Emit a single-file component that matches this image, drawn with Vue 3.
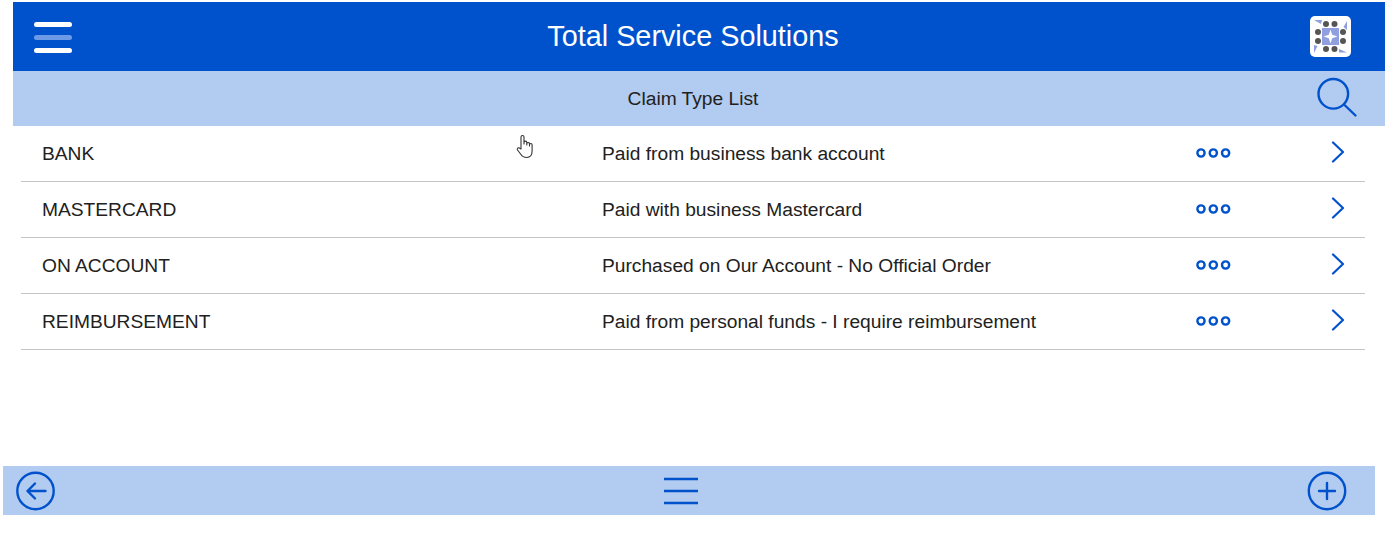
<script setup>
const rows = [
  { name: 'BANK', desc: 'Paid from business bank account' },
  { name: 'MASTERCARD', desc: 'Paid with business Mastercard' },
  { name: 'ON ACCOUNT', desc: 'Purchased on Our Account - No Official Order' },
  { name: 'REIMBURSEMENT', desc: 'Paid from personal funds - I require reimbursement' },
]
</script>

<template>
  <div class="page">
    <div class="main">
      <header class="top">
        <div class="burger">
          <span class="bar"></span>
          <span class="bar dim"></span>
          <span class="bar"></span>
        </div>
        <h1 class="title">Total Service Solutions</h1>
        <div class="logo">
          <svg width="41" height="41" viewBox="0 0 41 41">
            <rect width="41" height="41" rx="5" fill="#fff" />
            <rect x="12" y="12" width="17" height="17" fill="#8f9fdf" />
            <path d="M20.5 13.5 L22.2 18.8 L27.5 20.5 L22.2 22.2 L20.5 27.5 L18.8 22.2 L13.5 20.5 L18.8 18.8 Z" fill="#fff" />
            <g fill="#555">
              <circle cx="16" cy="8" r="3" /><circle cx="24.5" cy="8" r="3" />
              <circle cx="8" cy="16" r="3" /><circle cx="33" cy="16" r="3" />
              <circle cx="8" cy="25" r="3" /><circle cx="33" cy="25" r="3" />
              <circle cx="16" cy="33" r="3" /><circle cx="24.5" cy="33" r="3" />
            </g>
            <g fill="#8f9fdf">
              <path d="M4 4 L12 4 L11 8 Z" />
              <path d="M37 5 L37 14 L33.5 11 Z" />
              <path d="M4 37 L4 29 L7.5 30 Z" />
              <path d="M29 33 L37 36.5 L29 36.5 Z" />
            </g>
          </svg>
        </div>
      </header>
      <div class="sub">
        <span class="sub-title">Claim Type List</span>
        <svg class="search" width="42" height="42" viewBox="0 0 42 42" fill="none" stroke="#0052cc" stroke-width="2.4">
          <circle cx="17.3" cy="16.8" r="14.8" />
          <path d="M28 27.5 L39.5 38.5" stroke-linecap="round" />
        </svg>
      </div>
      <ul class="list">
        <li v-for="r in rows" :key="r.name" class="row">
          <span class="name">{{ r.name }}</span>
          <span class="desc">{{ r.desc }}</span>
          <svg class="dots" width="36" height="10" viewBox="0 0 36 10" fill="none" stroke="#0052cc" stroke-width="2.4">
            <circle cx="6" cy="5" r="3.6" />
            <circle cx="18.3" cy="5" r="3.6" />
            <circle cx="30.6" cy="5" r="3.6" />
          </svg>
          <svg class="chev" width="14" height="22" viewBox="0 0 14 22" fill="none" stroke="#0052cc" stroke-width="2.2" stroke-linecap="round" stroke-linejoin="round">
            <path d="M2 1.5 L12 11 L2 20.5" />
          </svg>
        </li>
      </ul>
      <svg class="cursor" width="18" height="26" viewBox="0 0 18 26" fill="#fff" stroke="#333" stroke-width="1.1" stroke-linejoin="round">
        <path d="M5 15 V3 a1.5 1.5 0 0 1 3 0 V10 V8.5 a1.4 1.4 0 0 1 2.8 0 V11 V9.5 a1.4 1.4 0 0 1 2.7 0 V12 V10.8 a1.3 1.3 0 0 1 2.6 0 V17 c0 4 -2 6.5 -5.5 6.5 c-3 0 -4.5 -1.2 -6 -3.5 L1.5 16 c-1 -1.7 1.5 -3 2.5 -1.5 Z" />
      </svg>
    </div>
    <footer class="bottom">
      <svg width="40" height="40" viewBox="0 0 40 40" fill="none" stroke="#0052cc" stroke-width="2.4" stroke-linecap="round" stroke-linejoin="round">
        <circle cx="20.5" cy="20" r="18.2" />
        <path d="M30.5 20 H12.5 M20 12.5 L12.5 20 L20 27.5" />
      </svg>
      <svg width="36" height="30" viewBox="0 0 36 30" fill="none" stroke="#0052cc" stroke-width="2.4">
        <path d="M1 3 H35 M1 15 H35 M1 27 H35" />
      </svg>
      <svg width="40" height="40" viewBox="0 0 40 40" fill="none" stroke="#0052cc" stroke-width="2.4" stroke-linecap="round">
        <circle cx="20" cy="20" r="18.2" />
        <path d="M12 20 H28 M20 12 V28" />
      </svg>
    </footer>
  </div>
</template>

<style scoped>
.page {
  width: 1385px;
  height: 549px;
  position: relative;
  background: #fff;
  font-family: "Liberation Sans", Arial, sans-serif;
  color: #212121;
  overflow: hidden;
  padding-top: 2px;
  box-sizing: border-box;
}
.main {
  margin-left: 13px;
  width: 1372px;
  position: relative;
}
.top {
  height: 69px;
  background: #0052cc;
  display: flex;
  align-items: center;
  justify-content: space-between;
  padding: 0 34px 0 21px;
  box-sizing: border-box;
  position: relative;
}
.burger {
  width: 38px;
  display: flex;
  flex-direction: column;
  gap: 8px;
  margin-top: 1px;
}
.bar {
  height: 5px;
  border-radius: 3px;
  background: #fff;
}
.bar.dim {
  background: #6d9ae6;
}
.title {
  position: absolute;
  left: 0;
  width: 1360px;
  margin: 0;
  text-align: center;
  color: #fff;
  font-size: 28.8px;
  font-weight: 400;
  pointer-events: none;
}
.logo {
  width: 41px;
  height: 41px;
}
.sub {
  height: 55px;
  background: #b2cbf0;
  display: flex;
  align-items: center;
  justify-content: center;
  padding-right: 12px;
  position: relative;
}
.sub-title {
  font-size: 19.2px;
}
.search {
  position: absolute;
  right: 27px;
  top: 6px;
}
.list {
  list-style: none;
  margin: 0 20px 0 8px;
  padding: 0;
}
.row {
  height: 56px;
  box-sizing: border-box;
  border-bottom: 1px solid #c6c6c6;
  display: flex;
  align-items: center;
  font-size: 19.2px;
  position: relative;
}
.name {
  margin-left: 21px;
  width: 560px;
  flex: none;
}
.desc {
  flex: none;
  width: 593px;
}
.dots {
  flex: none;
  margin-top: -2px;
}
.chev {
  margin-left: 100px;
  margin-top: -4px;
  flex: none;
}
.cursor {
  position: absolute;
  left: 503px;
  top: 132px;
}
.bottom {
  position: absolute;
  left: 3px;
  top: 466px;
  width: 1372px;
  height: 49px;
  background: #b2cbf0;
  display: flex;
  align-items: center;
  justify-content: space-between;
  padding: 0 28px 0 12px;
  box-sizing: border-box;
}
</style>
